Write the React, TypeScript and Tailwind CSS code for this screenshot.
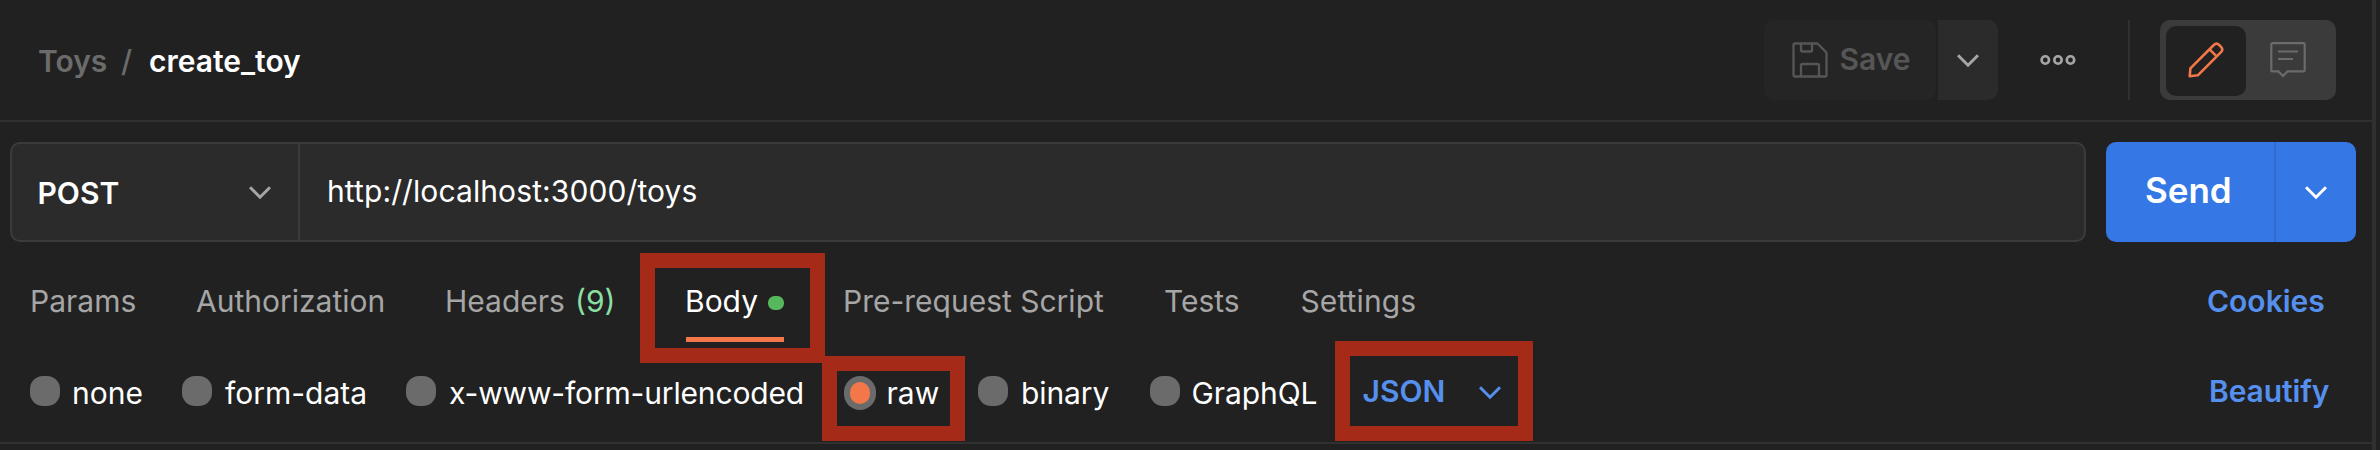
function Chevron({ className }: { className?: string }) {
  return (
    <svg width="22" height="14" viewBox="0 0 22 14" fill="none" className={`shrink-0 ${className ?? ""}`}>
      <path d="M1 1.2 L11 11.2 L21 1.2" stroke="currentColor" strokeWidth="3" />
    </svg>
  );
}

function SaveIcon() {
  return (
    <svg width="36" height="36" viewBox="0 0 36 36" fill="none" stroke="currentColor" strokeWidth="2.3" strokeLinejoin="round" className="shrink-0">
      <path d="M3 1.5H25.5L34.5 10.5V33Q34.5 34.5 33 34.5H3Q1.5 34.5 1.5 33V3Q1.5 1.5 3 1.5Z" />
      <path d="M9 1.5V8Q9 9.5 10.5 9.5H18.5Q20 9.5 20 8V1.5" />
      <path d="M9 34.5V23.5Q9 22 10.5 22H25.5Q27 22 27 23.5V34.5" />
    </svg>
  );
}

function PencilIcon() {
  return (
    <svg width="36" height="36" viewBox="0 0 36 36" fill="none" stroke="currentColor" strokeWidth="2.6" strokeLinejoin="round" className="shrink-0">
      <path d="M1.7 34.3L2.4 26.4L25.8 3Q28.5 0.4 31.2 3L33 4.8Q35.6 7.5 33 10.2L9.8 33.3Z" />
      <path d="M21.6 7.4L28.6 14.4" />
    </svg>
  );
}

function CommentIcon() {
  return (
    <svg width="36" height="36" viewBox="0 0 36 36" fill="none" stroke="currentColor" strokeWidth="2.2" className="shrink-0">
      <path d="M2.5 1.2H33.5Q34.7 1.2 34.7 2.4V28.2Q34.7 29.4 33.5 29.4H17.6L13 34L8.4 29.4H2.5Q1.3 29.4 1.3 28.2V2.4Q1.3 1.2 2.5 1.2Z" />
      <path d="M8 9.5H28M8 17H23" />
    </svg>
  );
}

function MoreIcon() {
  return (
    <svg width="36" height="10" viewBox="0 0 36 10" fill="none" stroke="currentColor" strokeWidth="2.6" className="shrink-0">
      <circle cx="5.3" cy="5" r="3.7" />
      <circle cx="18" cy="5" r="3.7" />
      <circle cx="30.5" cy="5" r="3.7" />
    </svg>
  );
}

function Radio({ label, width, gap, tracking }: { label: string; width: string; gap: string; tracking?: string }) {
  return (
    <div className={`flex shrink-0 ${width} ${gap}`}>
      <span className="mt-[-2px] size-[30px] shrink-0 rounded-[13px] bg-[#6b6b6b]" />
      <span className={tracking ?? ""}>{label}</span>
    </div>
  );
}

export default function App() {
  return (
    <div className="relative flex h-[450px] w-[2380px] overflow-hidden whitespace-nowrap bg-[#212121] font-['Inter',sans-serif] text-[30px] leading-[30px] text-white">
      <div className="flex w-[2372px] shrink-0 flex-col">
        <header className="flex h-[122px] items-start border-b-2 border-[#303030]">
          <div className="flex w-[1764px] pl-[38px] pt-[46px]">
            <span className="w-[83px] font-semibold text-[#6b6b6b]">Toys</span>
            <span className="w-7 font-medium text-[#6b6b6b]">/</span>
            <span className="font-semibold">create_toy</span>
          </div>
          <div className="mt-5 flex h-20 gap-[2px]">
            <button className="flex w-[172px] rounded-[10px] bg-[#252525] pl-7 pt-[22px] text-[#565656]">
              <SaveIcon />
              <span className="ml-[11.5px] mt-[2px] font-semibold">Save</span>
            </button>
            <button className="flex w-[60px] items-center justify-center rounded-r-[10px] bg-[#2b2b2b] pt-[1px] text-[#a6a6a6]">
              <Chevron />
            </button>
          </div>
          <div className="mt-5 flex h-20 w-[132px] items-center border-r-2 border-[#303030] pl-[42px] text-[#a6a6a6]">
            <MoreIcon />
          </div>
          <div className="ml-[30px] mt-5 flex h-20 w-44 rounded-[10px] bg-[#3b3b3b] pl-[6px] pt-[6px]">
            <button className="flex h-[70px] w-20 justify-center rounded-[10px] bg-[#212121] pt-4 text-[#f37748]">
              <PencilIcon />
            </button>
            <button className="ml-6 flex pt-4 text-[#6b6b6b]">
              <CommentIcon />
            </button>
          </div>
        </header>

        <div className="mt-5 flex h-[100px] gap-5 pl-[10px]">
          <div className="flex w-[2076px] rounded-[10px] border-2 border-[#3b3b3b] bg-[#2b2b2b]">
            <div className="flex w-[288px] border-r-2 border-[#3b3b3b] pl-[25.5px] pt-[34px]">
              <span className="w-[211.5px] font-semibold">POST</span>
              <Chevron className="mt-2 text-[#a6a6a6]" />
            </div>
            <div className="pl-[27px] pt-8 tracking-[0.1px]">http://localhost:3000/toys</div>
          </div>
          <div className="flex w-[250px] overflow-hidden rounded-[10px] bg-[#3578e5]">
            <button className="flex w-[170px] border-r-2 border-[#306ccf] pl-[39px] pt-[31px] text-[35px] font-semibold leading-[35px]">Send</button>
            <button className="flex flex-1 items-center justify-center pt-[2px]">
              <Chevron />
            </button>
          </div>
        </div>

        <nav className="flex h-[116px] pl-[30px] pt-11 text-[#a6a6a6]">
          <span className="w-[166px]">Params</span>
          <span className="w-[249px]">Authorization</span>
          <span className="flex w-[241px]">
            <span className="w-[130px]">Headers</span>
            <span className="text-[#8bdfa3]">(9)</span>
          </span>
          <div className="flex h-[56px] w-[98px] justify-between border-b-[5px] border-[#f37748] text-white">
            <span className="ml-[-1px]">Body</span>
            <span className="mt-[10px] h-[14px] w-4 rounded-[6.5px] bg-[#56b85c]" />
          </div>
          <span className="ml-[59px] w-[321px]">Pre-request Script</span>
          <span className="w-[136.5px]">Tests</span>
          <span className="tracking-[0.1px]">Settings</span>
          <span className="ml-auto w-[165px] font-semibold text-[#5690ee]">Cookies</span>
        </nav>

        <div className="flex h-[86px] border-b-2 border-[#303030] pl-[30px] pt-5">
          <Radio label="none" width="w-[152px]" gap="gap-3" />
          <Radio label="form-data" width="w-[224px]" gap="gap-[13px]" />
          <Radio label="x-www-form-urlencoded" width="w-[438px]" gap="gap-[13px]" tracking="tracking-[-0.16px]" />
          <div className="flex w-[134px] shrink-0 gap-[10.5px]">
            <span className="mt-[-2px] flex h-[34px] w-8 items-center justify-center rounded-full bg-[#6b6b6b]">
              <span className="h-[22px] w-5 rounded-[10px] bg-[#f37748]" />
            </span>
            <span>raw</span>
          </div>
          <Radio label="binary" width="w-[172px]" gap="gap-[13px]" tracking="tracking-[-0.1px]" />
          <Radio label="GraphQL" width="w-[212.5px]" gap="gap-[11.5px]" tracking="tracking-[-0.1px]" />
          <span className="mt-[-2px] w-[116.5px] font-semibold text-[#5690ee]">JSON</span>
          <Chevron className="mt-2 text-[#5690ee]" />
          <span className="ml-auto mt-[-2px] w-[163px] font-semibold tracking-[-0.1px] text-[#5690ee]">Beautify</span>
        </div>
      </div>
      <div className="w-1 shrink-0 bg-[#303030]" />

      <div className="absolute left-[640px] top-[253px] h-[110px] w-[185px] border-[15px] border-[#a52a17]" />
      <div className="absolute left-[822px] top-[356px] h-[85px] w-[143px] border-[15px] border-[#a52a17]" />
      <div className="absolute left-[1335px] top-[341px] h-[100px] w-[198px] border-[15px] border-[#a52a17]" />
    </div>
  );
}
